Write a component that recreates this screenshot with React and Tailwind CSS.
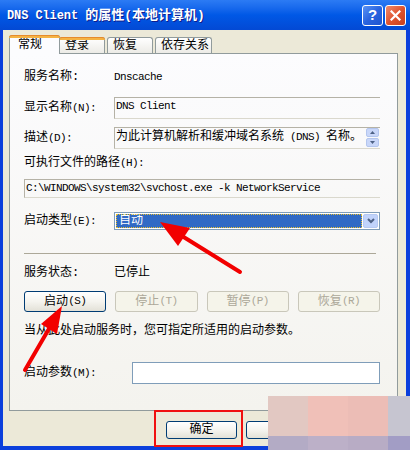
import React from 'react';

const FONT = "font-['Liberation_Mono','Noto_Sans_CJK_SC',monospace]";

const Lat = ({ children }) => <span className="text-[11px] tracking-[-0.6px]">{children}</span>;

const XpButton = ({ children, disabled, className = '' }) => (
  <div
    className={`flex items-center justify-center rounded-[3px] border text-[12px] whitespace-nowrap ${
      disabled
        ? 'border-[#C9C7BA] bg-[#F5F4EA] text-[#ACA899]'
        : 'border-[#003C74] bg-linear-to-b from-[#FFFFFF] via-[#F5F4EF] to-[#E3E1D7] text-black'
    } ${className}`}
  >
    {children}
  </div>
);

const Tab = ({ label, active, orange, className = '' }) => (
  <div
    className={`relative flex items-center whitespace-nowrap border border-b-0 border-[#919B9C] rounded-t-[3px] text-[12px] ${
      active ? 'h-[19px] bg-[#FCFCFE] z-10 -mb-px pl-[8px]' : 'h-[16px] bg-linear-to-b from-[#FFFFFF] to-[#ECEBE6] pl-[5px]'
    } ${className}`}
  >
    {orange && <div className="absolute -top-px -left-px -right-px h-[3px] rounded-t-[3px] bg-[#F5B343] border-t border-[#E68B2C]" />}
    {label}
  </div>
);

const Row = ({ label, children, className = '' }) => (
  <div className={`flex items-center ${className}`}>
    <div className="w-[90px] shrink-0 text-[12px] whitespace-nowrap">{label}</div>
    {children}
  </div>
);

const ScrollBtn = ({ up }) => (
  <div className="w-[13px] h-[9px] rounded-[2px] bg-[#C9D7F9] border border-[#B4C6EE] flex items-center justify-center">
    <svg width="5" height="3" viewBox="0 0 5 3">
      <path d={up ? 'M0 3 L2.5 0 L5 3 Z' : 'M0 0 L2.5 3 L5 0 Z'} fill="#4D6185" />
    </svg>
  </div>
);

export default function App() {
  return (
    <div className={`relative w-[410px] h-[450px] overflow-hidden flex flex-col ${FONT} text-black`}>
      {/* title bar */}
      <div className="h-[30px] shrink-0 flex items-center pl-[7px] pr-[4px] bg-linear-to-b from-[#2C7BF4] via-[#0058E6] to-[#0349D4]">
        <div className="flex-1 text-white font-bold text-[13px] [text-shadow:1px_1px_#0F1C8C] pt-[1px] whitespace-nowrap">
          <span className="text-[12px] tracking-[-0.1px]">DNS Client </span>的属性(本地计算机)
        </div>
        <div className="w-[21px] h-[21px] rounded-[3px] border border-white bg-linear-to-br from-[#5A93F5] via-[#2A64DF] to-[#1F55CF] flex items-center justify-center text-white font-bold text-[15px] font-['Liberation_Sans',sans-serif]">
          ?
        </div>
        <div className="ml-[2px] w-[21px] h-[21px] rounded-[3px] border border-white bg-linear-to-br from-[#EE8A6C] via-[#E0542F] to-[#C8401E] flex items-center justify-center">
          <svg width="11" height="11" viewBox="0 0 11 11">
            <path d="M1.5 1.5 L9.5 9.5 M9.5 1.5 L1.5 9.5" stroke="white" strokeWidth="2.2" strokeLinecap="square" />
          </svg>
        </div>
      </div>

      {/* dialog body */}
      <div className="flex-1 flex flex-col bg-[#ECE9D8] border-l-[3px] border-r-4 border-b-4 border-[#0B3FDC] pl-[6px] pr-[8px] pt-[5px]">
        <div className="flex items-end h-[18px]">
          <Tab label="常规" active orange className="w-[51px]" />
          <Tab label="登录" orange className="w-[46px] -ml-px" />
          <Tab label="恢复" className="w-[46px] ml-[2px]" />
          <Tab label="依存关系" className="w-[57px] ml-[2px]" />
        </div>

        <div className="h-[358px] border border-[#919B9C] bg-linear-to-b from-[#FCFCFE] to-[#F4F3EE] pl-[14px] pr-[17px] pt-[16px] flex flex-col">
          <Row label="服务名称:" className="h-[14px]">
            <Lat>Dnscache</Lat>
          </Row>

          <Row label={<>显示名称<Lat>(N):</Lat></>} className="mt-[13px] h-[22px]">
            <div className="flex-1 h-[22px] border-t border-l border-b border-t-[#B5B2A6] border-l-[#B5B2A6] border-b-[#DAD8CD] pl-[1px] leading-[14px]">
              <Lat>DNS Client</Lat>
            </div>
          </Row>

          <Row label={<>描述<Lat>(D):</Lat></>} className="mt-[8px] h-[22px]">
            <div className="flex-1 h-[22px] border-t border-l border-b border-t-[#B5B2A6] border-l-[#B5B2A6] border-b-[#DAD8CD] flex">
              <div className="flex-1 pl-[1px] text-[12px] leading-[18px] whitespace-nowrap overflow-hidden">
                为此计算机解析和缓冲域名系统<Lat> (DNS) </Lat>名称。
              </div>
              <div className="flex flex-col gap-[1px] pr-[1px]">
                <ScrollBtn up />
                <ScrollBtn />
              </div>
            </div>
          </Row>

          <div className="mt-[7px] h-[14px] flex items-center text-[12px] whitespace-nowrap">
            可执行文件的路径<Lat>(H):</Lat>
          </div>

          <div className="mt-[9px] h-[19px] border-t border-l border-b border-t-[#B5B2A6] border-l-[#B5B2A6] border-b-[#DAD8CD] pl-[1px] flex items-center">
            <Lat>C:\WINDOWS\system32\svchost.exe -k NetworkService</Lat>
          </div>

          <Row label={<>启动类型<Lat>(E):</Lat></>} className="mt-[14px] h-[18px]">
            <div className="flex-1 h-[18px] border border-[#7F9DB9] bg-white flex items-center p-[1px]">
              <div className="flex-1 h-full bg-[#316AC5] outline-1 outline-dotted outline-[#E8C030] -outline-offset-1 text-white text-[12px] leading-[14px] pl-[3px]">
                自动
              </div>
              <div className="ml-[1px] w-[15px] h-full rounded-[2px] bg-[#C1D3FB] border border-[#B6C9F2] flex items-center justify-center">
                <svg width="8" height="6" viewBox="0 0 8 6">
                  <path d="M1 1 L4 4 L7 1" stroke="#4D6185" strokeWidth="2" fill="none" />
                </svg>
              </div>
            </div>
          </Row>

          <div className="mt-[23px] h-px bg-[#ACA899] mr-[4px]" />

          <Row label="服务状态:" className="mt-[12px] h-[14px]">
            <span className="text-[12px]">已停止</span>
          </Row>

          <div className="mt-[11px] grid grid-cols-4 gap-[9px] h-[21px]">
            <XpButton>启动<Lat>(S)</Lat></XpButton>
            <XpButton disabled>停止<Lat>(T)</Lat></XpButton>
            <XpButton disabled>暂停<Lat>(P)</Lat></XpButton>
            <XpButton disabled>恢复<Lat>(R)</Lat></XpButton>
          </div>

          <div className="mt-[12px] h-[14px] flex items-center text-[12px] whitespace-nowrap">
            当从此处启动服务时，您可指定所适用的启动参数。
          </div>

          <div className="mt-[24px] flex items-center h-[22px]">
            <div className="w-[108px] shrink-0 text-[12px] whitespace-nowrap">
              启动参数<Lat>(M):</Lat>
            </div>
            <div className="flex-1 h-[22px] border border-[#7F9DB9] bg-white" />
          </div>
        </div>

        <div className="mt-[10px] flex pl-[157px] gap-[9px]">
          <XpButton className="w-[71px] h-[18px]">确定</XpButton>
          <XpButton className="w-[71px] h-[18px]">取消</XpButton>
        </div>
      </div>

      {/* annotation: red box around OK */}
      <div className="absolute left-[154px] top-[410px] w-[89px] h-[37px] border-2 border-[#F01010]" />

      {/* annotation: arrows */}
      <svg className="absolute inset-0 pointer-events-none" width="410" height="450" viewBox="0 0 410 450">
        <line x1="240" y1="272" x2="182" y2="236" stroke="#F20000" strokeWidth="4" strokeLinecap="round" />
        <polygon points="160,222 190,228 178,246" fill="#F20000" />
        <line x1="25" y1="370" x2="50" y2="327" stroke="#F20000" strokeWidth="4" strokeLinecap="round" />
        <polygon points="62,306 57,334 41,324" fill="#F20000" />
      </svg>

      {/* watermark mosaic */}
      <div className="absolute left-[268px] top-[396px] w-[142px] h-[54px] grid grid-cols-[40px_40px_40px_22px] grid-rows-[40px_14px]">
        <div className="bg-[#E2C8C2]" />
        <div className="bg-[#F0C0B8]" />
        <div className="bg-[#ECBDB6]" />
        <div className="bg-[#C6C5D0]" />
        <div className="bg-[#B3ABC5]" />
        <div className="bg-[#BCB0C8]" />
        <div className="bg-[#B8ACC5]" />
        <div className="bg-[#A29DC5]" />
      </div>
    </div>
  );
}
